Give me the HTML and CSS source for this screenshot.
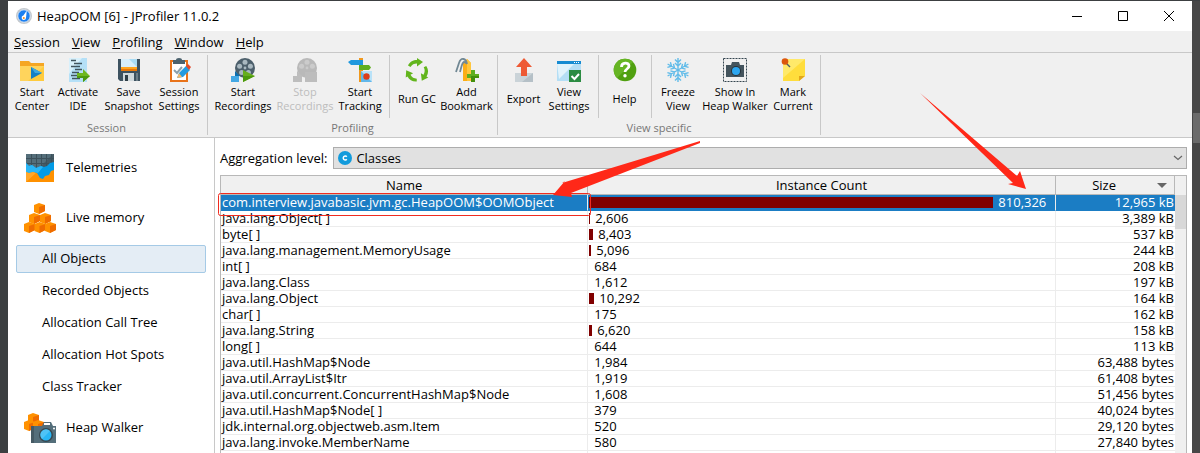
FILE: index.html
```html
<!DOCTYPE html>
<html lang="en">
<head>
<meta charset="utf-8">
<title>HeapOOM [6] - JProfiler 11.0.2</title>
<link rel="stylesheet" href="styles.css">
</head>
<body>
<div class="desktop">
<div class="window">
  <header class="titlebar">
    <svg class="app-icon" viewBox="0 0 16 16"><circle cx="8" cy="8" r="8" fill="#c3c8cd"/><circle cx="8" cy="8" r="6.200" fill="#1b7ff0" stroke="#eef3f8" stroke-width=".8"/><path d="M10.800 2.600 10 10a2.200 2.200 0 1 1-2.600-2.400z" fill="#fff"/><circle cx="7.800" cy="10" r="1" fill="#f08a1a"/></svg>
    <h1 class="title">HeapOOM [6] - JProfiler 11.0.2</h1>
    <div class="controls">
      <button class="control" aria-label="Minimize"><svg viewBox="0 0 12 12"><path d="M1 6.500h10" stroke="#000"/></svg></button>
      <button class="control" aria-label="Maximize"><svg viewBox="0 0 12 12"><path d="M1.500 1.500h9v9h-9z" fill="none" stroke="#000"/></svg></button>
      <button class="control" aria-label="Close"><svg viewBox="0 0 12 12"><path d="m1 1 10 10M11 1 1 11" stroke="#000"/></svg></button>
    </div>
  </header>
  <nav class="menubar">
    <button class="menu"><u>S</u>ession</button><button class="menu"><u>V</u>iew</button><button class="menu"><u>P</u>rofiling</button><button class="menu"><u>W</u>indow</button><button class="menu"><u>H</u>elp</button>
  </nav>

  <div class="toolbar">
    <section class="group">
      <div class="tools tools-session">
        <button class="tool"><svg viewBox="0 0 24 24"><path d="M0 3h9l2 2h13v18H0z" fill="#f5a623"/><path d="M0 8h24v15H0z" fill="#ffcb3d"/><path d="M0 8h24L8 23H0z" fill="#ffd45c"/><path d="m11 9 11 6-11 6z" fill="#1580c4"/><path d="m11 9 4 6h7z" fill="#3fa9e0"/></svg><span>Start<br>Center</span></button>
        <button class="tool"><svg viewBox="0 0 24 24"><path d="M3 0h18v24H3z" fill="#b5e0f7"/><path d="M3 0h13L3 16z" fill="#d8f0fb"/><path d="M5 2.500h5M8 5.500h8M5 8.500h9M9 11.500h7M6 14.500h7M5 17.500h7M6 20.500h8" stroke="#41545e" stroke-width="1.400"/><path d="M11 15h6v-4l7 7-7 6v-4h-6z" fill="#6eb820"/><path d="M11 18h13l-7 6v-4h-6z" fill="#4d9a10"/></svg><span>Activate<br>IDE</span></button>
        <button class="tool"><svg viewBox="0 0 24 24"><path d="M1 1h22v22H3l-2-2z" fill="#3d5260"/><path d="M4 1h16v12H4z" fill="#d7effb"/><path d="M12 1h8v8z" fill="#a9dcf5"/><path d="M4 9h16v2H4z" fill="#ffa51f"/><path d="M4 11h16v2H4z" fill="#e87708"/><path d="M6 15h11v8H6z" fill="#cfd8dc"/><path d="M8 17h3v6H8z" fill="#2f3f48"/><path d="M19 15h2v8h-2z" fill="#6b7d87"/></svg><span>Save<br>Snapshot</span></button>
        <button class="tool"><svg viewBox="0 0 24 24"><path d="M4 3h16v20H4z" fill="#fff" stroke="#e8731a" stroke-width="2"/><path d="M6 2h3a3 2 0 0 1 6 0h3v4H6z" fill="#4c626e"/><path d="m7 12 3 3 5-6" fill="none" stroke="#8ba0ab" stroke-width="2"/><path d="m10 20 2-5 7-7 4 4-7 7z" fill="#239be0"/><path d="m12 15 3 4-5 1z" fill="#f5b96b"/><path d="m19 8 2-2 3 3-2 3z" fill="#e34a2c"/></svg><span>Session<br>Settings</span></button>
      </div>
      <h2 class="group-name">Session</h2>
    </section>
    <section class="group">
      <div class="tools tools-profiling">
        <button class="tool"><svg viewBox="0 0 24 24"><circle cx="14" cy="10" r="10" fill="#4c5f6b"/><g fill="#a9b8c0"><circle cx="14" cy="4.300" r="2.500"/><circle cx="19.400" cy="8.200" r="2.500"/><circle cx="17.400" cy="14.600" r="2.500"/><circle cx="10.600" cy="14.600" r="2.500"/><circle cx="8.600" cy="8.200" r="2.500"/><circle cx="14" cy="10" r="1.400"/></g><path d="M0 18h8v6H0z" fill="#44a8e4"/><path d="m4 13 5 5H4z" fill="#0d6fae"/><path d="m12 12 12 6-12 6z" fill="#66ae1d"/><path d="M12 18h12l-12 6z" fill="#4c9a0c"/></svg><span>Start<br>Recordings</span></button>
        <button class="tool" disabled><svg viewBox="0 0 24 24"><circle cx="14" cy="10" r="10" fill="#b9b9b9"/><g fill="#cbcbcb"><circle cx="14" cy="4.300" r="2.500"/><circle cx="19.400" cy="8.200" r="2.500"/><circle cx="8.600" cy="8.200" r="2.500"/><circle cx="14" cy="10" r="1.400"/></g><path d="M0 18h4v-5l5 5v6H0zM12 14h12v10H12z" fill="#bdbdbd"/></svg><span>Stop<br>Recordings</span></button>
        <button class="tool"><svg viewBox="0 0 24 24"><path d="M11 0h4v24h-4z" fill="#f0981d"/><path d="m0 4 3-2h12v5H3z" fill="#1e98de"/><path d="M11 7h10l2 2.500-2 2.500H11z" fill="#5fae1f"/><path d="M13 13h11v11H13z" fill="#62b7ea"/><path d="m13 13 11 0v11z" fill="#b9e2f8"/><circle cx="18.500" cy="18.500" r="3.200" fill="#dd3c19"/></svg><span>Start<br>Tracking</span></button>
        <i class="rule"></i>
        <button class="tool"><svg viewBox="0 0 24 24"><g id="cycle" fill="#62b51c"><path d="M5.500 9 3 7.500C5 3.500 8 2 12 2V0l6 4-6 4.500V5.500C9 5.500 7 6.500 5.500 9z"/></g><use href="#cycle" transform="rotate(120 12 13)"/><use href="#cycle" transform="rotate(240 12 13)"/></svg><span>Run GC</span></button>
        <button class="tool"><svg viewBox="0 0 24 24"><path d="m8 5 4-4 4 4v18H8z" fill="#fbae17"/><path d="m12 1 4 4v18h-4z" fill="#ffc63d"/><path d="M12 6C11 0 6-1 4 5L1 14M12 6C8 1 7 6 5 14" fill="none" stroke="#718894" stroke-width="1.800"/><path d="M16 12h4v4h4v4h-4v4h-4v-4h-4v-4h4z" fill="#5fae1f"/><path d="M16 18h8v2h-4v4h-4z" fill="#448f0c"/></svg><span>Add<br>Bookmark</span></button>
      </div>
      <h2 class="group-name">Profiling</h2>
    </section>
    <section class="group">
      <div class="tools tools-view">
        <button class="tool"><svg viewBox="0 0 24 24"><path d="M3 15h18v9H3z" fill="#b5c0c7"/><path d="M3 15h18L10 24H3z" fill="#cad3d8"/><path d="m12 0 8 9h-5v9H9V9H4z" fill="#ee5a35"/></svg><span>Export</span></button>
        <button class="tool"><svg viewBox="0 0 24 24"><path d="M0 3h24v20H0z" fill="#b4def5"/><path d="M0 5h18L2 21z" fill="#e1f3fc"/><path d="M0 3h24v3H0z" fill="#168bd2"/><path d="M17 4.500h1m1 0h1m1 0h1" stroke="#fff"/><path d="M12 12h12v12H12z" fill="#2b8c42"/><path d="m14.500 18 3 3 4.500-5" fill="none" stroke="#fff" stroke-width="2"/></svg><span>View<br>Settings</span></button>
        <i class="rule"></i>
        <button class="tool"><svg viewBox="0 0 24 24"><circle cx="12" cy="12" r="11.300" fill="#50a010"/><path d="M4 20A11.300 11.300 0 0 1 20 4z" fill="#66b523"/><path d="M8.500 9c0-5 7.500-5 7.500-1 0 3-4 3-4 6" fill="none" stroke="#fff" stroke-width="2.800"/><circle cx="12" cy="17.800" r="1.700" fill="#fff"/></svg><span>Help</span></button>
        <i class="rule"></i>
        <button class="tool"><svg viewBox="0 0 24 24" fill="none" stroke="#62bce9" stroke-width="1.400"><g id="flake"><path d="M12 12V0M9 1.500 12 4.500l3-3M9 5 12 8l3-3"/></g><use href="#flake" transform="rotate(60 12 12)"/><use href="#flake" transform="rotate(120 12 12)"/><use href="#flake" transform="rotate(180 12 12)"/><use href="#flake" transform="rotate(240 12 12)"/><use href="#flake" transform="rotate(300 12 12)"/></svg><span>Freeze<br>View</span></button>
        <button class="tool"><svg viewBox="0 0 24 24"><path d="M.5.5h23v23H.5z" fill="none" stroke="#34454f" stroke-dasharray="2 1"/><path d="M3 7h5l1-3h7l1 3h4v12H3z" fill="#44545d"/><circle cx="13" cy="13" r="5" fill="#26343c"/><circle cx="13" cy="13" r="4" fill="#2ba5ef"/></svg><span>Show In<br>Heap Walker</span></button>
        <button class="tool"><svg viewBox="0 0 24 24"><path d="M2 1h22v17l-6 5H2z" fill="#ffdd3c"/><path d="M2 1h22L2 20z" fill="#ffe96a"/><path d="M24 18h-6v5z" fill="#e3a71b"/><path d="m5 5 4 4" stroke="#4d5e68" stroke-width="1.500"/><circle cx="4" cy="3.500" r="3.300" fill="#dc560c"/></svg><span>Mark<br>Current</span></button>
      </div>
      <h2 class="group-name">View specific</h2>
    </section>
  </div>

  <div class="workspace">
    <nav class="sidebar">
      <a class="section" href="#telemetries"><svg viewBox="0 0 32 32"><path d="M2 2h28v28H2z" fill="#ff9100"/><path d="M2 2h28v15H2z" fill="#455a64"/><path d="M2 2h27L13 18H2z" fill="#546e7a"/><path d="M2 6.500h28M2 11.500h28M7.500 2v14M12.500 2v14M17.500 2v14M22.500 2v14M27.500 2v14" stroke="#3d515b"/><path d="m2 11 3 3 3-1 4 3 5-2 3 1 3-1 3-3 4-1v8l-3 1-2 4-4 1-2 3-3-1-3-5-4-1-4 1-3-1z" fill="#039be5"/><path d="m2 11 3 3 3-1 4 3 5-2 2 1-5 6-5-1-4 1-3-1z" fill="#29b6f6"/><path d="m2 20 3 1 4-1 3 1-10 9z" fill="#ffa72b"/></svg><span>Telemetries</span></a>
      <a class="section" href="#live-memory"><svg viewBox="0 0 32 32"><defs><g id="cube"><path d="m0 2 5-2 6 2v6l-6 3-5-2z" fill="#ff9100"/><path d="m5 4 6-2v6l-6 3z" fill="#ef6c00"/></g></defs><use href="#cube" x="10" y="1"/><use href="#cube" x="5" y="11"/><use href="#cube" x="16" y="11"/><use href="#cube" x="0" y="20"/><use href="#cube" x="10.500" y="20"/><use href="#cube" x="21" y="20"/></svg><span>Live memory</span></a>
      <ul class="views">
        <li><a class="view selected" href="#all">All Objects</a></li>
        <li><a class="view" href="#recorded">Recorded Objects</a></li>
        <li><a class="view" href="#call-tree">Allocation Call Tree</a></li>
        <li><a class="view" href="#hot-spots">Allocation Hot Spots</a></li>
        <li><a class="view" href="#tracker">Class Tracker</a></li>
      </ul>
      <a class="section" href="#heap-walker"><svg viewBox="0 0 32 32"><use href="#cube" x="4" y="1"/><use href="#cube" x="0" y="8"/><use href="#cube" x="9" y="8"/><path d="M7 14h11l2-4h7l2 4h3v17H7z" fill="#546e7a"/><path d="M20 11h6v2h-6z" fill="#fff"/><path d="M7 14h3v17H7z" fill="#455a64"/><circle cx="22" cy="23" r="7" fill="#37474f"/><circle cx="22" cy="23" r="5.500" fill="#29b6f6"/><path d="M18 27a5.500 5.500 0 0 1 8-8z" fill="#4fc3f7"/><circle cx="30" cy="16.500" r="1" fill="#fff"/></svg><span>Heap Walker</span></a>
    </nav>

    <main class="content">
      <div class="filter">
        <label for="level">Aggregation level:</label>
        <div class="picker">
          <select id="level"><option>Classes</option></select>
          <svg class="class-icon" viewBox="0 0 14 14"><circle cx="7" cy="7" r="7" fill="#129bdc"/><path d="M8.800 5.700a2 2 0 1 0 0 2.600" fill="none" stroke="#fff" stroke-width="1.500"/></svg>
          <svg class="chevron" viewBox="0 0 10 6"><path d="m1 1 4 3.500L9 1" fill="none" stroke="#666" stroke-width="1.200"/></svg>
        </div>
      </div>
      <div class="grid">
        <table class="classes">
          <colgroup><col class="col-name"><col class="col-count"><col class="col-size"></colgroup>
          <thead><tr><th>Name</th><th>Instance Count</th><th><div class="sorted"><span>Size</span><svg viewBox="0 0 10 5"><path d="M0 0h10L5 5z" fill="#666"/></svg></div></th></tr></thead>
          <tbody>
            <tr class="active"><td>com.interview.javabasic.jvm.gc.HeapOOM$OOMObject</td><td><div class="count"><i class="bar" style="width:87%"></i>810,326</div></td><td>12,965 kB</td></tr>
            <tr><td>java.lang.Object[ ]</td><td><div class="count"><i class="bar" style="width:1px"></i>2,606</div></td><td>3,389 kB</td></tr>
            <tr><td>byte[ ]</td><td><div class="count"><i class="bar" style="width:4px"></i>8,403</div></td><td>537 kB</td></tr>
            <tr><td>java.lang.management.MemoryUsage</td><td><div class="count"><i class="bar" style="width:2px"></i>5,096</div></td><td>244 kB</td></tr>
            <tr><td>int[ ]</td><td><div class="count"><i class="bar" style="width:0"></i>684</div></td><td>208 kB</td></tr>
            <tr><td>java.lang.Class</td><td><div class="count"><i class="bar" style="width:0"></i>1,612</div></td><td>197 kB</td></tr>
            <tr><td>java.lang.Object</td><td><div class="count"><i class="bar" style="width:5px"></i>10,292</div></td><td>164 kB</td></tr>
            <tr><td>char[ ]</td><td><div class="count"><i class="bar" style="width:0"></i>175</div></td><td>162 kB</td></tr>
            <tr><td>java.lang.String</td><td><div class="count"><i class="bar" style="width:3px"></i>6,620</div></td><td>158 kB</td></tr>
            <tr><td>long[ ]</td><td><div class="count"><i class="bar" style="width:0"></i>644</div></td><td>113 kB</td></tr>
            <tr><td>java.util.HashMap$Node</td><td><div class="count"><i class="bar" style="width:0"></i>1,984</div></td><td>63,488 bytes</td></tr>
            <tr><td>java.util.ArrayList$Itr</td><td><div class="count"><i class="bar" style="width:0"></i>1,919</div></td><td>61,408 bytes</td></tr>
            <tr><td>java.util.concurrent.ConcurrentHashMap$Node</td><td><div class="count"><i class="bar" style="width:0"></i>1,608</div></td><td>51,456 bytes</td></tr>
            <tr><td>java.util.HashMap$Node[ ]</td><td><div class="count"><i class="bar" style="width:0"></i>379</div></td><td>40,024 bytes</td></tr>
            <tr><td>jdk.internal.org.objectweb.asm.Item</td><td><div class="count"><i class="bar" style="width:0"></i>520</div></td><td>29,120 bytes</td></tr>
            <tr><td>java.lang.invoke.MemberName</td><td><div class="count"><i class="bar" style="width:0"></i>580</div></td><td>27,840 bytes</td></tr>
            <tr><td>java.util.HashMap</td><td></td><td></td></tr>
          </tbody>
        </table>
        <div class="scrollbar"><i class="thumb"></i></div>
      </div>
    </main>
  </div>
</div>
<div class="edge"><i class="edge-thumb"></i></div>
<svg class="marks" viewBox="0 0 1200 453" preserveAspectRatio="none"><rect x="218.500" y="193.500" width="372" height="22" rx="2" fill="none" stroke="#f02c20"/><path d="M700 141 562 183l3-2-12 14 19 2-1-4L700 143zM920 93l93 90-5 1 18 5-6-18-3 5z" fill="#ff2818"/></svg>
</div>
</body>
</html>
```
FILE: styles.css
```css
* { box-sizing: border-box; }
body { margin: 0; font: 13px/16px "Open Sans", "Noto Sans", sans-serif; color: #000; }
button { font: inherit; color: inherit; border: 0; background: none; padding: 0; }
a { color: inherit; text-decoration: none; }
h1, h2 { margin: 0; font-weight: 400; }
svg { display: block; }

.desktop { position: relative; display: flex; height: 100vh; overflow: hidden; padding: 1px 0 0 8px; background: #3c3f41; }
.window { flex: 1; min-width: 0; display: flex; flex-direction: column; background: #fff; }
.edge { width: 8px; background: #474747; padding: 112px 0 0 1px; }
.edge-thumb { display: block; height: 30px; background: #6b6b6b; }

.titlebar { display: flex; align-items: center; height: 30px; flex: none; padding-left: 8px; }
.app-icon { width: 16px; height: 16px; }
.title { flex: 1; margin-left: 5px; font-size: 13px; }
.controls { display: flex; }
.control { width: 46px; height: 30px; display: grid; place-items: center; }
.control svg { width: 12px; height: 12px; }

.menubar { display: flex; gap: 12px; height: 22px; flex: none; padding: 0 6px; background: #f0f0f0; border-bottom: 1px solid #c8c8c8; }

.toolbar { display: flex; height: 85px; flex: none; padding: 2px 0; background: #f0f0f0; border-bottom: 1px solid #c8c8c8; }
.group { border-right: 1px solid #c8c8c8; padding: 0 4px; text-align: center; }
.group:first-child { padding-left: 2px; }
.tools { display: grid; height: 63px; }
.tools-session { grid-template-columns: 44px 48px 53px 48px; }
.tools-profiling { grid-template-columns: 62px 62px 48px 10px 46px 53px; }
.tools-view { grid-template-columns: 43px 48px 10px 43px 10px 44px 70px 46px; }
.rule { width: 1px; background: #c8c8c8; justify-self: center; }
.tool { display: flex; flex-direction: column; align-items: center; padding-top: 3px; font-size: 11px; line-height: 14px; white-space: nowrap; }
.tool svg { width: 24px; height: 24px; flex: none; }
.tool span { height: 34px; display: grid; align-content: center; }
.tool:disabled { color: #bdbdbd; }
.group-name { font-size: 11px; line-height: 20px; color: #777; }

.workspace { flex: 1; min-height: 0; display: flex; }
.sidebar { width: 207px; flex: none; padding: 5px 8px; border-right: 1px solid #c8c8c8; }
.section { display: flex; align-items: center; gap: 10px; height: 50px; padding-left: 8px; }
.section svg { width: 32px; height: 32px; }
.section span { padding-bottom: 2px; }
.views { list-style: none; margin: 0; padding: 2px 0; display: grid; gap: 4px; }
.view { display: flex; align-items: center; height: 28px; padding: 0 0 2px 25px; border: 1px solid transparent; border-radius: 2px; }
.selected { background: #e4edf5; border-color: #a5cae6; }

.content { flex: 1; min-width: 0; display: flex; flex-direction: column; padding: 9px 5px 0; }
.filter { display: flex; align-items: center; gap: 6px; }
.picker { position: relative; flex: 1; }
.picker select { display: block; appearance: none; width: 100%; height: 22px; padding: 0 22px; border: 1px solid #adadad; border-radius: 0; background: #e1e1e1; color: #000; font: inherit; }
.class-icon { position: absolute; left: 5px; top: 4px; width: 14px; height: 14px; }
.chevron { position: absolute; right: 4px; top: 8px; width: 10px; height: 6px; }

.grid { flex: 1; min-height: 0; display: flex; margin-top: 6px; border: 1px solid #b8b8b8; border-bottom: 0; overflow: hidden; }
.classes { flex: 1; align-self: flex-start; table-layout: fixed; border-collapse: separate; border-spacing: 0; }
.col-name { width: 38.5%; }
.col-count { width: 49%; }
th { height: 19px; padding: 0; font-weight: 400; background: #f0f0f0; border-right: 1px solid #b8b8b8; border-bottom: 1px solid #b8b8b8; }
td { height: 16px; line-height: 14px; padding: 0 1px; vertical-align: top; white-space: nowrap; border-right: 1px solid #ececec; border-bottom: 1px solid #ececec; }
td:last-child { text-align: right; border-right: 0; }
.sorted { display: flex; align-items: center; justify-content: flex-end; gap: 41px; padding-right: 7px; }
.sorted svg { width: 10px; height: 5px; }
.count { display: flex; align-items: center; gap: 5px; }
.bar { height: 11px; background: #800000; }
.active td { background: #1b7dc4; color: #fff; border-bottom-color: #1b7dc4; }
.scrollbar { width: 11px; background: #f0f0f0; padding-top: 19px; }
.thumb { display: block; height: 34px; background: #d8d8d8; }

.marks { position: absolute; inset: 0; width: 100%; height: 100%; pointer-events: none; }
```
